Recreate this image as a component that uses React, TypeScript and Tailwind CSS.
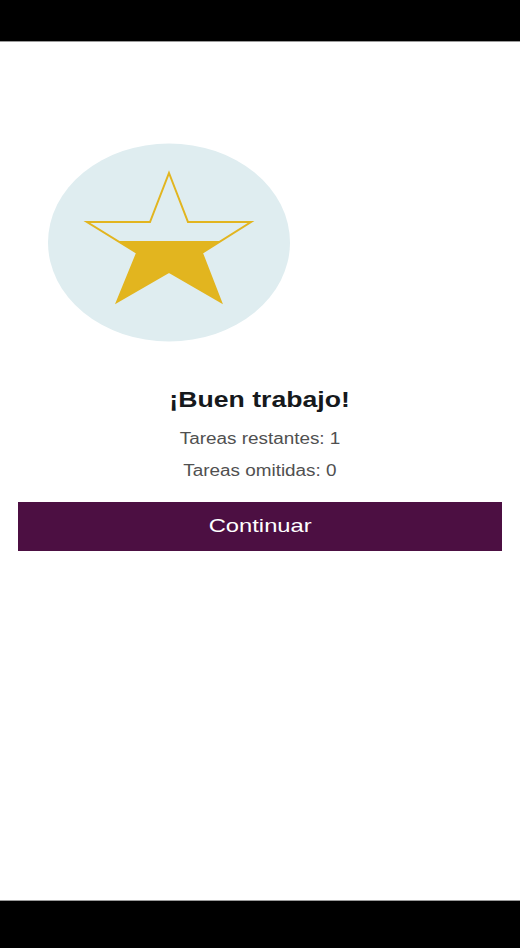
const STAR_OUTLINE =
  "M169 173 L188 222 L251 222 L202 253 L221 302 L169 272 L117 302 L137 253 L87 222 L150 222 Z";

function StarBadge() {
  return (
    <svg
      width="242"
      height="199"
      viewBox="48 143 242 199"
      className="block"
    >
      <ellipse cx="169" cy="242.5" rx="121" ry="99" fill="#dfedf0" />
      <defs>
        <clipPath id="lower-half">
          <rect x="48" y="241" width="242" height="120" />
        </clipPath>
      </defs>
      <path d={STAR_OUTLINE} fill="#e2b51f" clipPath="url(#lower-half)" />
      <path
        d={STAR_OUTLINE}
        fill="none"
        stroke="#e2b51f"
        strokeWidth={2}
        strokeLinejoin="miter"
      />
    </svg>
  );
}

export default function App() {
  return (
    <div
      className="w-[520px] h-[948px] flex flex-col bg-black"
      style={{ fontFamily: "'Liberation Sans', Arial, sans-serif" }}
    >
      <div className="h-[42px] bg-black border-b border-[#9a9a9a]" />

      <div className="flex-1 bg-white px-[18px]">
        <div className="pt-[101px] pl-[30px]">
          <StarBadge />
        </div>

        <div className="mt-[43px] flex flex-col items-center">
          <h1 className="text-[22px] leading-[30px] font-bold text-[#16191c] scale-x-[1.21]">
            ¡Buen trabajo!
          </h1>

          <p className="mt-[14px] text-[16px] leading-[20px] text-[#505050] scale-x-[1.18]">
            Tareas restantes: 1
          </p>

          <p className="mt-[12px] text-[16px] leading-[20px] text-[#505050] scale-x-[1.18]">
            Tareas omitidas: 0
          </p>
        </div>

        <button className="mt-[21px] w-full h-[49px] bg-[#4c0f42] text-white flex items-center justify-center">
          <span className="text-[19px] scale-x-[1.25]">Continuar</span>
        </button>
      </div>

      <div className="h-[48px] bg-black border-t border-[#9a9a9a]" />
    </div>
  );
}
